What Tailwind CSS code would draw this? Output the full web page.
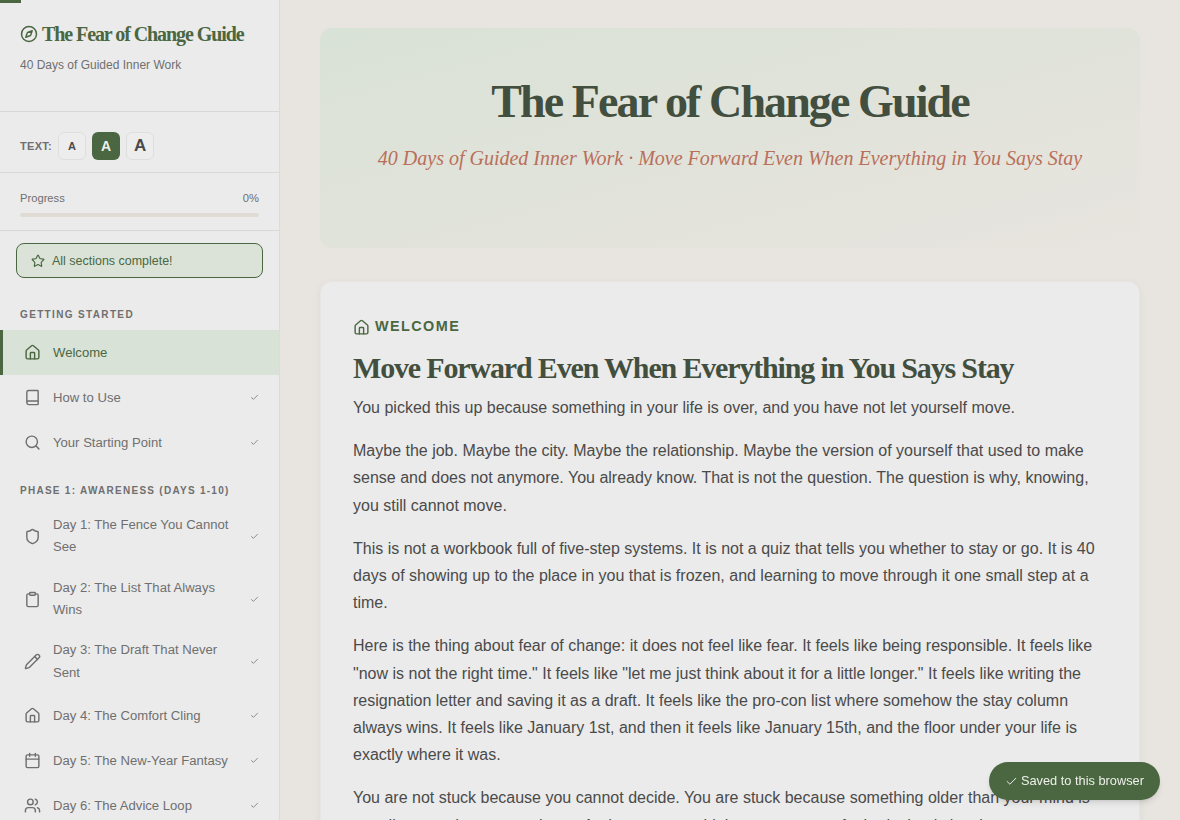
<!DOCTYPE html>
<html lang="en">
<head>
    <meta charset="UTF-8">
    <meta name="viewport" content="width=device-width, initial-scale=1.0">
    <title>The Fear of Change Guide</title>
    <script src="https://cdn.jsdelivr.net/npm/@tailwindcss/browser@4"></script>
</head>
<body class="h-[820px] overflow-hidden bg-[#e8e4df] font-['Liberation_Sans',Arial,sans-serif] text-[#4a4a4a]">
    <div class="absolute top-0 left-0 h-[3px] w-[21px] bg-[#4a6741] z-10"></div>

    <div class="flex h-[820px]">
        <aside class="w-[280px] shrink-0 h-full overflow-hidden bg-[#ebebeb] border-r border-[#dedbd7]">
            <div class="h-[112px] px-5 pt-[22px] border-b border-[#d8d8d6]">
                <div class="flex items-center gap-[4px] h-6 text-[#4a6741]">
                    <svg class="w-[18px] h-[18px] shrink-0" viewBox="0 0 24 24" fill="none" stroke="currentColor" stroke-width="2" stroke-linecap="round" stroke-linejoin="round"><circle cx="12" cy="12" r="10"/><path d="m16.24 7.76-1.804 5.411a2 2 0 0 1-1.265 1.265L7.76 16.24l1.804-5.411a2 2 0 0 1 1.265-1.265z"/></svg>
                    <h2 class="font-['Liberation_Serif',serif] font-bold text-[20px] tracking-[-1.08px] whitespace-nowrap">The Fear of Change Guide</h2>
                </div>
                <p class="mt-3 text-[12px] leading-[14px] text-[#6f6f6f]">40 Days of Guided Inner Work</p>
            </div>

            <div class="h-[61px] px-5 pt-2 flex items-center gap-[6px] border-b border-[#d8d8d6]">
                <span class="text-[11px] font-bold tracking-[0.3px] text-[#6f6f6f]">TEXT:</span>
                <button class="w-7 h-7 rounded-md border border-[#dedede] bg-[#ededed] text-[11px] font-bold text-[#4a4a4a]">A</button>
                <button class="w-7 h-7 rounded-md bg-[#4a6741] text-[14px] font-bold text-[#eef0ea]">A</button>
                <button class="w-7 h-7 rounded-md border border-[#dedede] bg-[#ededed] text-[17px] font-bold text-[#4a4a4a]">A</button>
            </div>

            <div class="h-[58px] px-5 pt-[18px] border-b border-[#d8d8d6]">
                <div class="flex justify-between text-[11.2px] leading-[14px] text-[#6f6f6f]">
                    <span>Progress</span>
                    <span>0%</span>
                </div>
                <div class="mt-2 h-1 rounded-full bg-[#e0dbd5]"></div>
            </div>

            <div class="mx-4 mt-3 h-[35px] px-[14px] flex items-center gap-[7px] rounded-lg border border-[#4a6741] bg-[#dbe3d8] text-[12.48px] leading-[18px] text-[#4a6741]">
                <svg class="w-[14px] h-[14px] shrink-0" viewBox="0 0 24 24" fill="none" stroke="currentColor" stroke-width="2" stroke-linecap="round" stroke-linejoin="round"><path d="M11.525 2.295a.53.53 0 0 1 .95 0l2.31 4.679a2.12 2.12 0 0 0 1.595 1.16l5.166.756a.53.53 0 0 1 .294.904l-3.736 3.638a2.12 2.12 0 0 0-.611 1.878l.882 5.14a.53.53 0 0 1-.771.56l-4.618-2.428a2.12 2.12 0 0 0-1.973 0L6.396 21.01a.53.53 0 0 1-.77-.56l.881-5.139a2.12 2.12 0 0 0-.611-1.879L2.16 9.795a.53.53 0 0 1 .294-.906l5.165-.755a2.12 2.12 0 0 0 1.597-1.16z"/></svg>
                <span class="pt-px">All sections complete!</span>
            </div>

            <nav class="mt-[31px]">
                <h3 class="px-5 text-[10px] leading-3 font-bold tracking-[1.35px] text-[#6f6f6f]">GETTING STARTED</h3>

                <a class="mt-[9px] h-[45px] pl-[21px] pr-5 flex items-center gap-3 border-l-[3px] border-[#4a6741] bg-[#d9e2d6] text-[13.12px] text-[#4a6741]">
                    <svg class="w-[17px] h-[17px] shrink-0" viewBox="0 0 24 24" fill="none" stroke="currentColor" stroke-width="2" stroke-linecap="round" stroke-linejoin="round"><path d="M15 21v-8a1 1 0 0 0-1-1h-4a1 1 0 0 0-1 1v8"/><path d="M3 10a2 2 0 0 1 .709-1.528l7-5.999a2 2 0 0 1 2.582 0l7 5.999A2 2 0 0 1 21 10v9a2 2 0 0 1-2 2H5a2 2 0 0 1-2-2z"/></svg>
                    <span class="flex-1">Welcome</span>
                </a>
                <a class="h-[45px] pl-6 pr-5 flex items-center gap-3 text-[13.12px] text-[#6f6f6f]">
                    <svg class="w-[17px] h-[17px] shrink-0" viewBox="0 0 24 24" fill="none" stroke="currentColor" stroke-width="2" stroke-linecap="round" stroke-linejoin="round"><path d="M4 19.5v-15A2.5 2.5 0 0 1 6.5 2H19a1 1 0 0 1 1 1v18a1 1 0 0 1-1 1H6.5a1 1 0 0 1 0-5H20"/></svg>
                    <span class="flex-1">How to Use</span>
                    <svg class="w-[9px] h-[9px] shrink-0" viewBox="0 0 24 24" fill="none" stroke="currentColor" stroke-width="2" stroke-linecap="round" stroke-linejoin="round"><path d="M20 6 9 17l-5-5"/></svg>
                </a>
                <a class="h-[45px] pl-6 pr-5 flex items-center gap-3 text-[13.12px] text-[#6f6f6f]">
                    <svg class="w-[17px] h-[17px] shrink-0" viewBox="0 0 24 24" fill="none" stroke="currentColor" stroke-width="2" stroke-linecap="round" stroke-linejoin="round"><path d="m21 21-4.34-4.34"/><circle cx="11" cy="11" r="8"/></svg>
                    <span class="flex-1">Your Starting Point</span>
                    <svg class="w-[9px] h-[9px] shrink-0" viewBox="0 0 24 24" fill="none" stroke="currentColor" stroke-width="2" stroke-linecap="round" stroke-linejoin="round"><path d="M20 6 9 17l-5-5"/></svg>
                </a>

                <h3 class="mt-[20px] mb-2 px-5 text-[10px] leading-3 font-bold tracking-[1.27px] text-[#6f6f6f] whitespace-nowrap">PHASE 1: AWARENESS (DAYS 1-10)</h3>

                <a class="h-[62.7px] pl-6 pr-5 flex items-center gap-3 text-[13.12px] leading-[22.3px] text-[#6f6f6f]">
                    <svg class="w-[17px] h-[17px] shrink-0" viewBox="0 0 24 24" fill="none" stroke="currentColor" stroke-width="2" stroke-linecap="round" stroke-linejoin="round"><path d="M20 13c0 5-3.5 7.5-7.66 8.95a1 1 0 0 1-.67-.01C7.5 20.5 4 18 4 13V6a1 1 0 0 1 1-1c2 0 4.5-1.2 6.24-2.72a1.17 1.17 0 0 1 1.52 0C14.51 3.81 17 5 19 5a1 1 0 0 1 1 1z"/></svg>
                    <span class="flex-1">Day 1: The Fence You Cannot See</span>
                    <svg class="w-[9px] h-[9px] shrink-0" viewBox="0 0 24 24" fill="none" stroke="currentColor" stroke-width="2" stroke-linecap="round" stroke-linejoin="round"><path d="M20 6 9 17l-5-5"/></svg>
                </a>
                <a class="h-[62.7px] pl-6 pr-5 flex items-center gap-3 text-[13.12px] leading-[22.3px] text-[#6f6f6f]">
                    <svg class="w-[17px] h-[17px] shrink-0" viewBox="0 0 24 24" fill="none" stroke="currentColor" stroke-width="2" stroke-linecap="round" stroke-linejoin="round"><rect width="8" height="4" x="8" y="2" rx="1" ry="1"/><path d="M16 4h2a2 2 0 0 1 2 2v14a2 2 0 0 1-2 2H6a2 2 0 0 1-2-2V6a2 2 0 0 1 2-2h2"/></svg>
                    <span class="flex-1">Day 2: The List That Always Wins</span>
                    <svg class="w-[9px] h-[9px] shrink-0" viewBox="0 0 24 24" fill="none" stroke="currentColor" stroke-width="2" stroke-linecap="round" stroke-linejoin="round"><path d="M20 6 9 17l-5-5"/></svg>
                </a>
                <a class="h-[62.7px] pl-6 pr-5 flex items-center gap-3 text-[13.12px] leading-[22.3px] text-[#6f6f6f]">
                    <svg class="w-[17px] h-[17px] shrink-0" viewBox="0 0 24 24" fill="none" stroke="currentColor" stroke-width="2" stroke-linecap="round" stroke-linejoin="round"><path d="M21.174 6.812a1 1 0 0 0-3.986-3.987L3.842 16.174a2 2 0 0 0-.5.83l-1.321 4.352a.5.5 0 0 0 .623.622l4.353-1.32a2 2 0 0 0 .83-.497z"/><path d="m15 5 4 4"/></svg>
                    <span class="flex-1">Day 3: The Draft That Never Sent</span>
                    <svg class="w-[9px] h-[9px] shrink-0" viewBox="0 0 24 24" fill="none" stroke="currentColor" stroke-width="2" stroke-linecap="round" stroke-linejoin="round"><path d="M20 6 9 17l-5-5"/></svg>
                </a>
                <a class="h-[45px] pl-6 pr-5 flex items-center gap-3 text-[13.12px] text-[#6f6f6f]">
                    <svg class="w-[17px] h-[17px] shrink-0" viewBox="0 0 24 24" fill="none" stroke="currentColor" stroke-width="2" stroke-linecap="round" stroke-linejoin="round"><path d="M15 21v-8a1 1 0 0 0-1-1h-4a1 1 0 0 0-1 1v8"/><path d="M3 10a2 2 0 0 1 .709-1.528l7-5.999a2 2 0 0 1 2.582 0l7 5.999A2 2 0 0 1 21 10v9a2 2 0 0 1-2 2H5a2 2 0 0 1-2-2z"/></svg>
                    <span class="flex-1">Day 4: The Comfort Cling</span>
                    <svg class="w-[9px] h-[9px] shrink-0" viewBox="0 0 24 24" fill="none" stroke="currentColor" stroke-width="2" stroke-linecap="round" stroke-linejoin="round"><path d="M20 6 9 17l-5-5"/></svg>
                </a>
                <a class="h-[45px] pl-6 pr-5 flex items-center gap-3 text-[13.12px] text-[#6f6f6f]">
                    <svg class="w-[17px] h-[17px] shrink-0" viewBox="0 0 24 24" fill="none" stroke="currentColor" stroke-width="2" stroke-linecap="round" stroke-linejoin="round"><path d="M8 2v4"/><path d="M16 2v4"/><rect width="18" height="18" x="3" y="4" rx="2"/><path d="M3 10h18"/></svg>
                    <span class="flex-1">Day 5: The New-Year Fantasy</span>
                    <svg class="w-[9px] h-[9px] shrink-0" viewBox="0 0 24 24" fill="none" stroke="currentColor" stroke-width="2" stroke-linecap="round" stroke-linejoin="round"><path d="M20 6 9 17l-5-5"/></svg>
                </a>
                <a class="h-[45px] pl-6 pr-5 flex items-center gap-3 text-[13.12px] text-[#6f6f6f]">
                    <svg class="w-[17px] h-[17px] shrink-0" viewBox="0 0 24 24" fill="none" stroke="currentColor" stroke-width="2" stroke-linecap="round" stroke-linejoin="round"><path d="M16 21v-2a4 4 0 0 0-4-4H6a4 4 0 0 0-4 4v2"/><circle cx="9" cy="7" r="4"/><path d="M22 21v-2a4 4 0 0 0-3-3.87"/><path d="M16 3.13a4 4 0 0 1 0 7.75"/></svg>
                    <span class="flex-1">Day 6: The Advice Loop</span>
                    <svg class="w-[9px] h-[9px] shrink-0" viewBox="0 0 24 24" fill="none" stroke="currentColor" stroke-width="2" stroke-linecap="round" stroke-linejoin="round"><path d="M20 6 9 17l-5-5"/></svg>
                </a>
            </nav>
        </aside>

        <main class="flex-1 h-full overflow-hidden pt-7 pl-10 pr-10">
            <section class="h-[220px] pt-[46px] rounded-xl bg-linear-to-br from-[#d9e2d6] to-[#e8e4df] text-center">
                <h1 class="font-['Liberation_Serif',serif] font-bold text-[46px] leading-[56px] tracking-[-1.9px] text-[#434f3e]">The Fear of Change Guide</h1>
                <p class="mt-[14px] font-['Liberation_Serif',serif] italic text-[20px] leading-7 text-[#b96f5a]">40 Days of Guided Inner Work · Move Forward Even When Everything in You Says Stay</p>
            </section>

            <article class="mt-[33px] rounded-xl border border-[#e8e6e3] bg-[#ebebeb] shadow-[0_2px_8px_rgba(0,0,0,0.05)] pt-9 px-8 pb-8 text-[16px] leading-[27.2px]">
                <div class="flex items-center gap-[5px] h-[18px] text-[#4a6741]">
                    <svg class="w-[17px] h-[17px]" viewBox="0 0 24 24" fill="none" stroke="currentColor" stroke-width="2" stroke-linecap="round" stroke-linejoin="round"><path d="M15 21v-8a1 1 0 0 0-1-1h-4a1 1 0 0 0-1 1v8"/><path d="M3 10a2 2 0 0 1 .709-1.528l7-5.999a2 2 0 0 1 2.582 0l7 5.999A2 2 0 0 1 21 10v9a2 2 0 0 1-2 2H5a2 2 0 0 1-2-2z"/></svg>
                    <span class="text-[14.4px] font-bold tracking-[1.44px]">WELCOME</span>
                </div>
                <h2 class="mt-[14px] font-['Liberation_Serif',serif] font-bold text-[30px] leading-[36px] tracking-[-1.16px] text-[#434f3e] whitespace-nowrap">Move Forward Even When Everything in You Says Stay</h2>
                <p class="mt-2 mb-[16px]">You picked this up because something in your life is over, and you have not let yourself move.</p>
                <p class="mb-[16px]">Maybe the job. Maybe the city. Maybe the relationship. Maybe the version of yourself that used to make sense and does not anymore. You already know. That is not the question. The question is why, knowing, you still cannot move.</p>
                <p class="mb-[16px]">This is not a workbook full of five-step systems. It is not a quiz that tells you whether to stay or go. It is 40 days of showing up to the place in you that is frozen, and learning to move through it one small step at a time.</p>
                <p class="mb-[16px]">Here is the thing about fear of change: it does not feel like fear. It feels like being responsible. It feels like "now is not the right time." It feels like "let me just think about it for a little longer." It feels like writing the resignation letter and saving it as a draft. It feels like the pro-con list where somehow the stay column always wins. It feels like January 1st, and then it feels like January 15th, and the floor under your life is exactly where it was.</p>
                <p>You are not stuck because you cannot decide. You are stuck because something older than your mind is standing guard over your throat. And you cannot think your way out of a body that is loyal.</p>
            </article>
        </main>
    </div>

    <div class="fixed right-5 bottom-5 h-[38px] px-4 flex items-center gap-[3px] rounded-full bg-[#4a6741] text-[#eef0ea] text-[12.8px] shadow-md">
        <svg class="w-[13px] h-[13px]" viewBox="0 0 24 24" fill="none" stroke="currentColor" stroke-width="1.8" stroke-linecap="round" stroke-linejoin="round"><path d="M20 6 9 17l-5-5"/></svg>
        Saved to this browser
    </div>
</body>
</html>
